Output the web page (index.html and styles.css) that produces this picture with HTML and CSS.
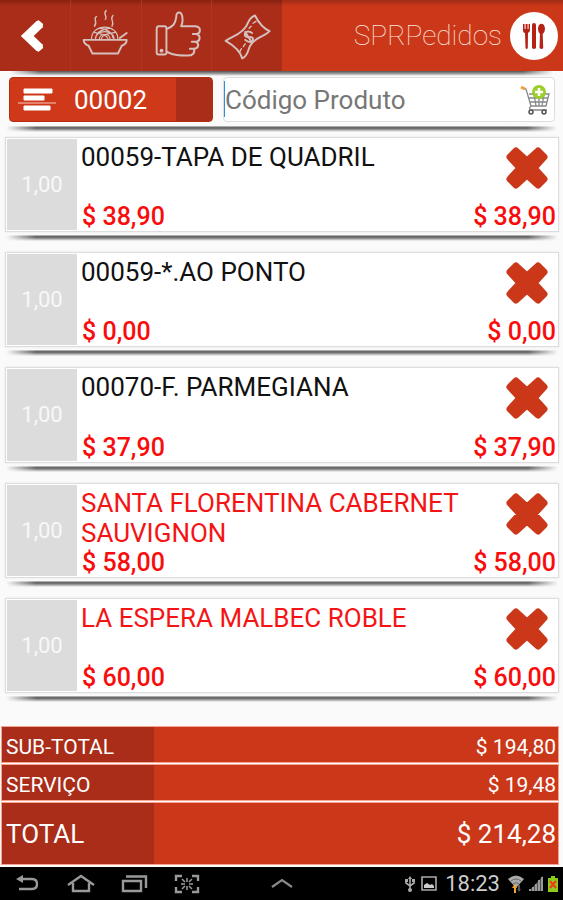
FILE: index.html
```html
<!DOCTYPE html>
<html lang="pt-BR">
<head>
<meta charset="utf-8">
<meta name="viewport" content="width=device-width, initial-scale=1">
<title>SPRPedidos</title>
<link rel="stylesheet" href="styles.css">
</head>
<body>
<svg class="defs" aria-hidden="true">
  <symbol id="remove" viewBox="0 0 44 44">
    <path d="M11 5 22 15 33 5 39 11 29 22 39 33 33 39 22 29 11 39 5 33 15 22 5 11Z" fill="#cb3819" stroke="#cb3819" stroke-width="7" stroke-linejoin="round"/>
  </symbol>
</svg>
<header class="header shadow">
  <nav class="actions" aria-label="Ações">
    <button class="action" aria-label="Voltar"><svg viewBox="0 0 71 71"><path d="M40 24 27.500 36 40 48" fill="none" stroke="#fff" stroke-width="9"/><path d="M36.500 21 39 20 43.500 24 43 28M43 44 43.500 48 39 52 36.500 51" fill="#fff"/></svg></button>
    <button class="action" aria-label="Pratos"><svg viewBox="0 0 71 71" fill="none" stroke="#d5c0bd" stroke-width="2" stroke-linecap="round" stroke-linejoin="round"><path d="M13 40H57Q57 44 52 46L48 54H22L18 46Q13 44 13 40ZM50 38 57 33"/><path d="M21 39C21 23 48 23 48 39M25 39C25 29 44 29 44 39M29 39C29 33 40 33 40 39M23 32C30 34 36 34 38 39M46 32C38 34 32 34 31 39M29 28C36 29 42 32 43 38M40 28C32 29 26 32 25 38" stroke-width="1.2"/><path d="M26 16C22 19 28 21 24 26M36 10C32 13 38 16 35 19M43 15C39 19 45 21 42 26" stroke-width="1.4"/></svg></button>
    <button class="action" aria-label="Confirmar"><svg viewBox="-1 0 71 71" fill="none" stroke="#d5c0bd" stroke-width="2" stroke-linecap="round" stroke-linejoin="round"><path d="M16 26H22Q24 26 24 28V53Q24 55 22 55H16Q14 55 14 53V29Q14 26 16 26ZM24 29C31 26 33 24 34 17C34 10 39 11 40 15C41 19 41 22 39 26H54C60 27 59 33 55 34H51M55 34C60 36 58 42 54 42H50M54 42C58 44 57 49 52 49H48M52 49C54 54 50 56 46 56C38 56 31 56 24 52"/><circle cx="19" cy="51" r="1"/></svg></button>
    <button class="action" aria-label="Pagamento"><svg viewBox="-1 0 71 71" fill="none" stroke="#d5c0bd" stroke-width="2" stroke-linecap="round" stroke-linejoin="round"><path d="M13 41C22 35 28 35 34 26C37 20 38 17 43 15C46 21 51 28 58 31C51 38 43 37 38 46C35 52 36 56 30 59C28 51 20 45 13 41Z"/><path d="M40 33C36 30 31 32 33 36C36 39 40 35 41 39C41 43 36 43 33 40M33 32 40 43" stroke-width="2"/><path d="M41 23 44 21M37 28 39 26M27 53 29 49M31 47 33 44" stroke-width="1.4"/></svg></button>
  </nav>
  <div class="brand">
    <span class="brand-name">SPRPedidos</span>
    <svg class="brand-logo" viewBox="0 0 48 48" aria-hidden="true"><circle cx="24" cy="24" r="24" fill="#fff"/><path d="M13 12v6q0 3 2 3l.5 15q1.200 2 2.300 0L18 21q2-1 2-3v-6h-1.400v5h-1V12h-2v5h-1v-5ZM22 36V13q0-2 2-2t2 2v23q-2 2-4 0ZM29.500 36l.5-14q-2-2-2-5c0-7 7-7 7 0q0 3-2.300 5l.5 14q-1.500 2-3.700 0Z" fill="#b62316"/></svg>
  </div>
</header>
<main class="content">
  <form class="search shadow">
    <button class="order" type="button">
      <svg viewBox="0 0 40 26" aria-hidden="true"><path d="M7 2H35V6H7ZM7 9H27V13H7ZM7 19H33V23H7Z" fill="#fff" stroke="#fff" stroke-linejoin="round"/><path d="M1 16H39" stroke="#f5c9c0" stroke-width="1.200"/></svg>
      <span>00002</span>
    </button>
    <div class="field">
      <input type="text" placeholder="Código Produto" aria-label="Código Produto">
      <button class="cart" type="button" aria-label="Adicionar ao carrinho"><svg viewBox="0 0 32 32"><path d="M3 4 7 5 12 22H27L30 10H10M10 14H29M11 18H28M15 10 17 22M20 10V22M25 10 23 22M12 22Q9 25 12 26H28" fill="none" stroke="#87898a" stroke-width="1.300"/><path d="M2 3 6 5" stroke="#efa336" stroke-width="3"/><circle cx="12" cy="28" r="2" fill="#eee" stroke="#555" stroke-width="1.500"/><circle cx="25" cy="28" r="2" fill="#eee" stroke="#555" stroke-width="1.500"/><circle cx="20" cy="8" r="7" fill="#9bcf2b"/><path d="M20 4V12M16 8H24" stroke="#fff" stroke-width="2.600"/></svg></button>
    </div>
  </form>
  <ul class="items">
    <li class="item shadow"><span class="qty">1,00</span><div class="info"><h2>00059-TAPA DE QUADRIL</h2><span class="price">$ 38,90</span></div><div class="side"><button aria-label="Remover"><svg><use href="#remove"/></svg></button><span class="price">$ 38,90</span></div></li>
    <li class="item shadow"><span class="qty">1,00</span><div class="info"><h2>00059-*.AO PONTO</h2><span class="price">$ 0,00</span></div><div class="side"><button aria-label="Remover"><svg><use href="#remove"/></svg></button><span class="price">$ 0,00</span></div></li>
    <li class="item shadow"><span class="qty">1,00</span><div class="info"><h2>00070-F. PARMEGIANA</h2><span class="price">$ 37,90</span></div><div class="side"><button aria-label="Remover"><svg><use href="#remove"/></svg></button><span class="price">$ 37,90</span></div></li>
    <li class="item shadow pending"><span class="qty">1,00</span><div class="info"><h2>SANTA FLORENTINA CABERNET SAUVIGNON</h2><span class="price">$ 58,00</span></div><div class="side"><button aria-label="Remover"><svg><use href="#remove"/></svg></button><span class="price">$ 58,00</span></div></li>
    <li class="item shadow pending"><span class="qty">1,00</span><div class="info"><h2>LA ESPERA MALBEC ROBLE</h2><span class="price">$ 60,00</span></div><div class="side"><button aria-label="Remover"><svg><use href="#remove"/></svg></button><span class="price">$ 60,00</span></div></li>
  </ul>
  <dl class="totals">
    <div class="total-row"><dt>SUB-TOTAL</dt><dd>$ 194,80</dd></div>
    <div class="total-row"><dt>SERVIÇO</dt><dd>$ 19,48</dd></div>
    <div class="total-row grand"><dt>TOTAL</dt><dd>$ 214,28</dd></div>
  </dl>
</main>
<footer class="system">
  <div class="keys">
    <button aria-label="Voltar"><svg viewBox="0 0 28 20"><path d="M7 5H18Q23 5 23 10T18 15H5" fill="none" stroke="#999" stroke-width="2.400"/><path d="M2 5 9 1V9Z" fill="#999"/></svg></button>
    <button aria-label="Início"><svg viewBox="0 0 28 20"><path d="M1 11 14 2 27 11M6 9V17H22V9" fill="none" stroke="#999" stroke-width="2.400"/></svg></button>
    <button aria-label="Recentes"><svg viewBox="0 0 28 20"><path d="M3 7H21V17H3ZM6 2.500H26V14" fill="none" stroke="#999" stroke-width="2.400"/></svg></button>
    <button aria-label="Capturar"><svg viewBox="0 0 28 20"><path d="M3 7V2H9M19 2H25V7M25 13V18H19M9 18H3V13" fill="none" stroke="#999" stroke-width="2.400"/><path d="M14 4V8M14 12V16M8 10H12M16 10H20M9 5 12 8M19 5 16 8M9 15 12 12M19 15 16 12" stroke="#999" stroke-width="1.500"/></svg></button>
  </div>
  <button class="expand" aria-label="Expandir"><svg viewBox="0 0 28 20"><path d="M4 13 14 6 24 13" fill="none" stroke="#888" stroke-width="2.200"/></svg></button>
  <div class="status">
    <svg width="12" height="18" viewBox="0 0 12 18" aria-hidden="true"><path d="M6 3V16M2 5V8L6 11 10 8V5" fill="none" stroke="#aaa" stroke-width="1.600"/><path d="M4 4 6 1 8 4ZM1 4h3v3H1ZM8 4h3v3H8Z" fill="#aaa"/><circle cx="6" cy="15" r="2" fill="#aaa"/></svg>
    <svg width="16" height="18" viewBox="0 0 16 18" aria-hidden="true"><path d="M1 2H15V15H1Z" fill="none" stroke="#aaa" stroke-width="1.600"/><path d="M3 13V10L6 8 9 10 11 9 13 11V13Z" fill="#ccc"/></svg>
    <time>18:23</time>
    <svg width="16" height="20" viewBox="0 0 16 20" aria-hidden="true"><path d="M0 5Q8-2 16 5L8 14Z" fill="#aaa"/><path d="M3 7Q8 3 13 7M5 10Q8 7 11 10" stroke="#666" fill="none"/><path d="M6 19V14H4L6.500 10 9 14H8V19Z" fill="#f1a32d"/><path d="M10 11H12V15H13L11 18 9 15H10Z" fill="#555"/></svg>
    <svg width="14" height="18" viewBox="0 0 14 18" aria-hidden="true"><path d="M0 16 14 1V16Z" fill="#555"/><path d="M0 16V14H2V16ZM3 16V12H5V16ZM6 16V9H8V16ZM9 16V5H11V16ZM12 16V2H14V16Z" fill="#999"/></svg>
    <svg width="10" height="18" viewBox="0 0 10 18" aria-hidden="true"><path d="M3 1H7V3H10V17H0V3H3Z" fill="#8ccc1c"/><path d="M2 6 8 13M8 6 2 13" stroke="#ef3b1c" stroke-width="2.200"/></svg>
  </div>
</footer>
</body>
</html>
```
FILE: styles.css
```css
* { box-sizing: border-box; }
body {
  margin: 0;
  min-height: 100vh;
  display: flex;
  flex-direction: column;
  font-family: Roboto, "Liberation Sans", sans-serif;
  background: #fafafa;
  color: #111;
}
button { border: 0; padding: 0; margin: 0; background: none; font: inherit; color: inherit; }
svg { display: block; }
.defs { position: absolute; width: 0; height: 0; }

/* Tapered strip lying just below a block */
.shadow { position: relative; }
.shadow::after {
  content: "";
  position: absolute;
  left: 6px;
  right: 6px;
  bottom: -10px;
  height: 6px;
  background: linear-gradient(#ccc, #555 30%, #999 60%, transparent);
  mask-image: linear-gradient(90deg, transparent, #000 30px, #000 calc(100% - 30px), transparent);
}

.header {
  display: flex;
  height: 71px;
  background: linear-gradient(#9f2a14, #cb3819 6px);
}
.header::after { bottom: -5px; left: 10px; right: 10px; height: 5px; background: linear-gradient(#555, #999 50%, transparent); }
.actions {
  flex: 0 0 50%;
  display: grid;
  grid-template-columns: repeat(4, 1fr);
  background: linear-gradient(#88210f, #a92d19 6px);
}
.action + .action { border-left: 1px solid #b23320; }
.action svg { width: 100%; height: 71px; }
.brand {
  flex: 1;
  display: flex;
  align-items: center;
  justify-content: flex-end;
  gap: 8px;
  padding-right: 5px;
  color: #fde3dc;
}
.brand-name { font-size: 28px; font-weight: 100; }
.brand-logo { width: 48px; height: 48px; }

.content { flex: 1; display: flex; flex-direction: column; }
.search { display: flex; gap: 10px; padding: 6px 8px 0 9px; margin-bottom: 15px; }
.order {
  flex: 0 1 204px;
  height: 45px;
  display: flex;
  align-items: center;
  gap: 17px;
  padding-left: 7px;
  border-radius: 4px;
  border: 1px solid #b62c10;
  background: linear-gradient(90deg, #d0381a 82%, #a92d19 82%);
  color: #fff;
  font-size: 26px;
}
.order svg { width: 40px; height: 26px; }
.field {
  flex: 1;
  min-width: 0;
  display: flex;
  align-items: center;
  padding-right: 3px;
  border: 1px solid #ddd;
  border-radius: 4px;
  background: linear-gradient(#2c8fe0, #2c8fe0) 0 3px / 1px 36px no-repeat #fff;
}
.field input {
  flex: 1;
  min-width: 0;
  padding: 0 0 0 1px;
  border: 0;
  outline: 0;
  background: none;
  font: 26px Roboto, sans-serif;
}
.field input::placeholder { color: #777; }
.cart svg { width: 32px; height: 32px; }

.items {
  flex: 1;
  display: grid;
  grid-auto-rows: 1fr;
  gap: 20px;
  margin: 0;
  padding: 0 4px 34px 5px;
  list-style: none;
}
.item {
  display: flex;
  min-height: 95px;
  padding: 1px;
  border: 1px solid #ddd;
  background: #fff;
  box-shadow: 0 0 2px #e5e5e5;
}
.item::after { left: 0; right: 0; }
.qty {
  flex: 0 0 70px;
  display: grid;
  place-items: center;
  background: #dcdcdc;
  color: #f8f8f8;
  font-size: 22px;
}
.info, .side { display: flex; flex-direction: column; justify-content: space-between; }
.info { flex: 1; padding-left: 4px; }
.item h2 { margin: 3px 0 0; font-size: 26px; line-height: 30px; font-weight: 400; }
.item.pending h2 { color: #f51414; }
.price { color: #f80c0c; font-size: 25px; line-height: 26px; font-weight: 500; }
.info .price { padding-left: 1px; }
.side { align-items: flex-end; padding-right: 1px; }
.side button { margin: 7px 7px 0 0; }
.side svg { width: 44px; height: 44px; }

.totals { margin: 0; padding: 0 5px 3px 2px; display: grid; gap: 3px; color: #fff; font-size: 21px; }
.total-row {
  display: flex;
  justify-content: space-between;
  align-items: center;
  height: 35px;
  padding: 5px 2px 0 4px;
  background: linear-gradient(90deg, #a92d19 152px, #cb3819 152px);
  box-shadow: 0 0 0 1px #f6a391;
}
.total-row dd { margin: 0; }
.grand { height: 61px; padding-top: 0; font-size: 26px; }

.system {
  height: 33px;
  display: flex;
  align-items: center;
  justify-content: space-between;
  padding: 0 5px 0 14px;
  background: #000;
  color: #ccc;
}
.keys { display: flex; gap: 25px; }
.system button svg { width: 28px; height: 20px; }
.expand { margin-right: 42px; }
.status { display: flex; align-items: center; gap: 5px; }
.status time { font-size: 22px; margin: 0 3px; }
```
